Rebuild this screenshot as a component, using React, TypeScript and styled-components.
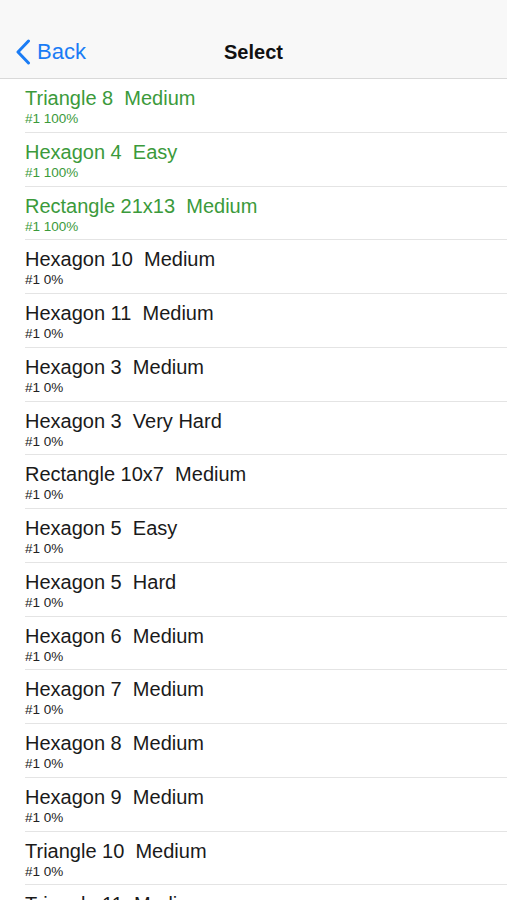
import React from 'react';
import styled, { createGlobalStyle } from 'styled-components';

const GlobalStyle = createGlobalStyle`
    html, body {
        margin: 0;
        padding: 0;
        background: #ffffff;
        font-family: "Liberation Sans", Arial, sans-serif;
    }
`;

const Page = styled.div`
    width: 507px;
    height: 900px;
    overflow: hidden;
    background: #ffffff;
`;

const NavBar = styled.div`
    display: grid;
    grid-template-columns: 1fr auto 1fr;
    align-items: center;
    height: 79px;
    padding-top: 26px;
    box-sizing: border-box;
    background: #f8f8f8;
    border-bottom: 1px solid #d9d9d9;
`;

const BackButton = styled.div`
    display: flex;
    align-items: center;
    gap: 6px;
    padding-left: 15px;
    color: #1a7cf5;
    font-size: 22px;
`;

const Title = styled.div`
    font-size: 20px;
    font-weight: bold;
    color: #111111;
`;

const List = styled.div`
    display: flex;
    flex-direction: column;
`;

const Row = styled.div`
    height: 53.75px;
    margin-left: 25px;
    box-sizing: border-box;
    border-bottom: 1px solid #e4e4e4;
    display: flex;
    flex-direction: column;
    padding-top: 8px;
`;

const Name = styled.div<{ $done: boolean }>`
    font-size: 20px;
    line-height: 23px;
    white-space: pre;
    color: ${p => (p.$done ? '#3b9a3b' : '#1a1a1a')};
`;

const Score = styled.div<{ $done: boolean }>`
    font-size: 13.5px;
    line-height: 16px;
    margin-top: 1px;
    color: ${p => (p.$done ? '#3b9a3b' : '#222222')};
`;

const levels: [string, boolean][] = [
    ['Triangle 8  Medium', true],
    ['Hexagon 4  Easy', true],
    ['Rectangle 21x13  Medium', true],
    ['Hexagon 10  Medium', false],
    ['Hexagon 11  Medium', false],
    ['Hexagon 3  Medium', false],
    ['Hexagon 3  Very Hard', false],
    ['Rectangle 10x7  Medium', false],
    ['Hexagon 5  Easy', false],
    ['Hexagon 5  Hard', false],
    ['Hexagon 6  Medium', false],
    ['Hexagon 7  Medium', false],
    ['Hexagon 8  Medium', false],
    ['Hexagon 9  Medium', false],
    ['Triangle 10  Medium', false],
    ['Triangle 11  Medium', false],
];

export default function App() {
    return (
        <Page>
            <GlobalStyle />
            <NavBar>
                <BackButton>
                    <svg width="16" height="26" viewBox="0 0 16 26">
                        <path d="M13.5 2 L3 13 L13.5 24" fill="none" stroke="#1a7cf5" strokeWidth="3" strokeLinecap="round" strokeLinejoin="round" />
                    </svg>
                    Back
                </BackButton>
                <Title>Select</Title>
                <div />
            </NavBar>
            <List>
                {levels.map(([name, done]) => (
                    <Row key={name}>
                        <Name $done={done}>{name}</Name>
                        <Score $done={done}>{done ? '#1 100%' : '#1 0%'}</Score>
                    </Row>
                ))}
            </List>
        </Page>
    );
}
